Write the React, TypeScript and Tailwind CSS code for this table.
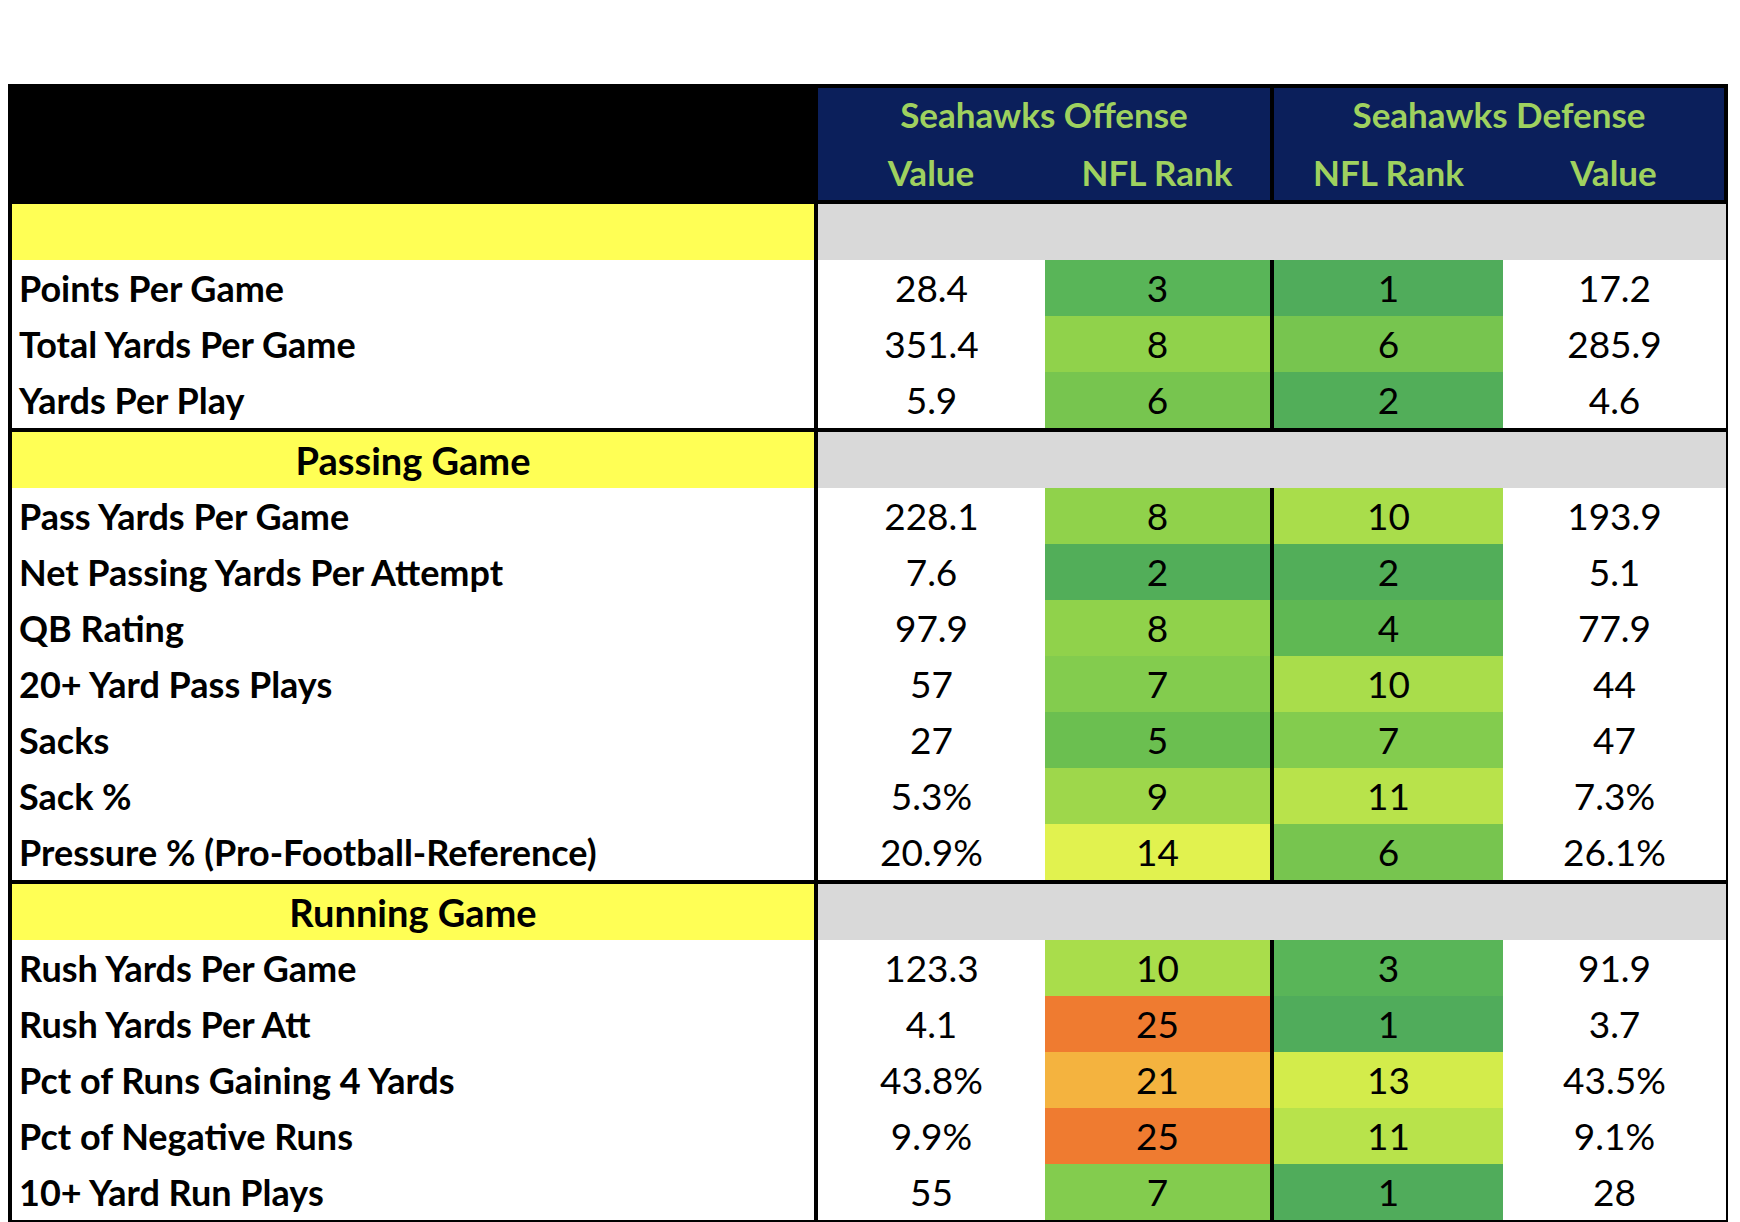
type StatRow = {
  label: string;
  offValue: string;
  offRank: number;
  defRank: number;
  defValue: string;
};

type Section = {
  title: string;
  rows: StatRow[];
};

const sections: Section[] = [
  {
    title: '',
    rows: [
      { label: 'Points Per Game', offValue: '28.4', offRank: 3, defRank: 1, defValue: '17.2' },
      { label: 'Total Yards Per Game', offValue: '351.4', offRank: 8, defRank: 6, defValue: '285.9' },
      { label: 'Yards Per Play', offValue: '5.9', offRank: 6, defRank: 2, defValue: '4.6' },
    ],
  },
  {
    title: 'Passing Game',
    rows: [
      { label: 'Pass Yards Per Game', offValue: '228.1', offRank: 8, defRank: 10, defValue: '193.9' },
      { label: 'Net Passing Yards Per Attempt', offValue: '7.6', offRank: 2, defRank: 2, defValue: '5.1' },
      { label: 'QB Rating', offValue: '97.9', offRank: 8, defRank: 4, defValue: '77.9' },
      { label: '20+ Yard Pass Plays', offValue: '57', offRank: 7, defRank: 10, defValue: '44' },
      { label: 'Sacks', offValue: '27', offRank: 5, defRank: 7, defValue: '47' },
      { label: 'Sack %', offValue: '5.3%', offRank: 9, defRank: 11, defValue: '7.3%' },
      { label: 'Pressure % (Pro-Football-Reference)', offValue: '20.9%', offRank: 14, defRank: 6, defValue: '26.1%' },
    ],
  },
  {
    title: 'Running Game',
    rows: [
      { label: 'Rush Yards Per Game', offValue: '123.3', offRank: 10, defRank: 3, defValue: '91.9' },
      { label: 'Rush Yards Per Att', offValue: '4.1', offRank: 25, defRank: 1, defValue: '3.7' },
      { label: 'Pct of Runs Gaining 4 Yards', offValue: '43.8%', offRank: 21, defRank: 13, defValue: '43.5%' },
      { label: 'Pct of Negative Runs', offValue: '9.9%', offRank: 25, defRank: 11, defValue: '9.1%' },
      { label: '10+ Yard Run Plays', offValue: '55', offRank: 7, defRank: 1, defValue: '28' },
    ],
  },
];

// Excel-style colour scale, green (best) to orange (worse)
const rankColors: Record<number, string> = {
  1: 'bg-[#50ac5b]',
  2: 'bg-[#52ae59]',
  3: 'bg-[#59b558]',
  4: 'bg-[#5fb853]',
  5: 'bg-[#6bbf50]',
  6: 'bg-[#77c54f]',
  7: 'bg-[#83cc4e]',
  8: 'bg-[#90d24b]',
  9: 'bg-[#9ed74b]',
  10: 'bg-[#a9dd4b]',
  11: 'bg-[#b8e34b]',
  13: 'bg-[#d3ec4b]',
  14: 'bg-[#e1f24f]',
  21: 'bg-[#f4b33f]',
  25: 'bg-[#ef7b30]',
};

const rowGrid = 'grid grid-cols-[802px_4px_227px_225px_4px_229px_223px] h-[56px]';
const numCell = 'flex items-center justify-center text-[37px] text-black';

function Divider() {
  return <div className="h-[4px] shrink-0 bg-black" />;
}

function SectionHeader({ title }: { title: string }) {
  return (
    <div className={rowGrid}>
      <div className="flex items-center justify-center bg-[#ffff55] text-[38px] font-bold text-black">
        {title}
      </div>
      <div className="bg-black" />
      <div className="col-span-5 bg-[#d9d9d9]" />
    </div>
  );
}

function DataRow({ row }: { row: StatRow }) {
  return (
    <div className={rowGrid}>
      <div className="flex items-center pl-[7px] bg-white text-[36px] font-bold text-black whitespace-nowrap">
        {row.label}
      </div>
      <div className="bg-black" />
      <div className={`${numCell} bg-white`}>{row.offValue}</div>
      <div className={`${numCell} ${rankColors[row.offRank] ?? 'bg-white'}`}>{row.offRank}</div>
      <div className="bg-black" />
      <div className={`${numCell} ${rankColors[row.defRank] ?? 'bg-white'}`}>{row.defRank}</div>
      <div className={`${numCell} bg-white`}>{row.defValue}</div>
    </div>
  );
}

export default function App() {
  return (
    <div className="w-[1740px] h-[1222px] bg-white pt-[84px] pl-[8px] font-['Lato',sans-serif] overflow-hidden">
      <div className="w-[1720px] border-x-[4px] border-t-[4px] border-b-[3px] border-black bg-black">
        {/* Header */}
        <div className="grid grid-cols-[806px_452px_4px_450px] h-[112px]">
          <div className="bg-black" />
          <div className="bg-[#0b1f5b] grid grid-cols-2 grid-rows-2 text-[35px] font-bold text-[#9fd15f]">
            <div className="col-span-2 flex items-center justify-center pb-[3px]">Seahawks Offense</div>
            <div className="flex items-center justify-center">Value</div>
            <div className="flex items-center justify-center">NFL Rank</div>
          </div>
          <div className="bg-black" />
          <div className="bg-[#0b1f5b] grid grid-cols-[229px_221px] grid-rows-2 text-[35px] font-bold text-[#9fd15f]">
            <div className="col-span-2 flex items-center justify-center pb-[3px]">Seahawks Defense</div>
            <div className="flex items-center justify-center">NFL Rank</div>
            <div className="flex items-center justify-center">Value</div>
          </div>
        </div>
        <Divider />

        {sections.map((section, i) => (
          <div key={i}>
            {i > 0 && <Divider />}
            <SectionHeader title={section.title} />
            {section.rows.map((row) => (
              <DataRow key={row.label} row={row} />
            ))}
          </div>
        ))}
      </div>
    </div>
  );
}
